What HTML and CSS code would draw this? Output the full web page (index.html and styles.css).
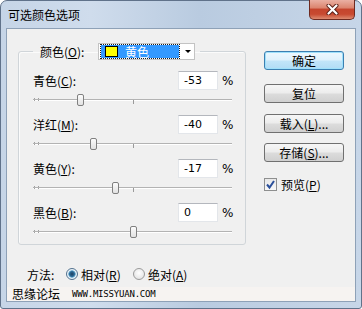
FILE: index.html
```html
<!DOCTYPE html>
<html lang="zh-CN">
<head>
<meta charset="utf-8">
<title>可选颜色选项</title>
<link rel="stylesheet" href="styles.css">
</head>
<body>
<div class="window">
  <div class="titlebar">
    <span class="title">可选颜色选项</span>
    <span class="close">
      <svg width="13" height="11" viewBox="0 0 13 11"><path d="M2.5 1.5 L10.5 9.5 M10.5 1.5 L2.5 9.5" stroke="#5a1f16" stroke-width="4" stroke-linecap="round"/><path d="M2.5 1.5 L10.5 9.5 M10.5 1.5 L2.5 9.5" stroke="#ffffff" stroke-width="2.2" stroke-linecap="round"/></svg>
    </span>
  </div>
  <div class="client">
    <div class="main">
      <div class="left">
        <fieldset class="group">
          <legend class="legend">
            <span class="legend-lbl">颜色(<u>O</u>):</span>
            <span class="combo">
              <span class="combo-sel"><span class="swatch"></span><span class="combo-text">黄色</span></span>
              <span class="arrow"></span>
            </span>
          </legend>
          <div class="row">
            <div class="line"><span class="lbl">青色(<u>C</u>):</span><span class="num">-53</span><span class="pct">%</span></div>
            <div class="slider"><span class="track"></span><span class="dots"></span><span class="tick"></span><span class="thumb" style="left:44px"></span></div>
          </div>
          <div class="row">
            <div class="line"><span class="lbl">洋红(<u>M</u>):</span><span class="num">-40</span><span class="pct">%</span></div>
            <div class="slider"><span class="track"></span><span class="dots"></span><span class="tick"></span><span class="thumb" style="left:57px"></span></div>
          </div>
          <div class="row">
            <div class="line"><span class="lbl">黄色(<u>Y</u>):</span><span class="num">-17</span><span class="pct">%</span></div>
            <div class="slider"><span class="track"></span><span class="dots"></span><span class="tick"></span><span class="thumb" style="left:79px"></span></div>
          </div>
          <div class="row">
            <div class="line"><span class="lbl">黑色(<u>B</u>):</span><span class="num">0</span><span class="pct">%</span></div>
            <div class="slider"><span class="track"></span><span class="dots"></span><span class="tick"></span><span class="thumb" style="left:97px"></span></div>
          </div>
        </fieldset>
        <div class="method">
          <span class="method-lbl">方法:</span>
          <span class="opt opt-first"><span class="radio checked"></span><span>相对(<u>R</u>)</span></span>
          <span class="opt"><span class="radio"></span><span>绝对(<u>A</u>)</span></span>
        </div>
      </div>
      <div class="right">
        <span class="btn btn-default">确定</span>
        <span class="btn btn-reset">复位</span>
        <span class="btn btn-load">载入(<u>L</u>)...</span>
        <span class="btn btn-save">存储(<u>S</u>)...</span>
        <span class="preview"><span class="checkbox"><svg width="11" height="11" viewBox="0 0 11 11"><path d="M2 5.5 L4.5 8.5 L9 2" fill="none" stroke="#2a4f9a" stroke-width="2"/></svg></span><span>预览(<u>P</u>)</span></span>
      </div>
    </div>
    <div class="watermark">
      <span class="wm-name">思缘论坛</span>
      <span class="wm-url">www.missyuan.com</span>
    </div>
  </div>
</div>
</body>
</html>
```
FILE: styles.css
```css
* { box-sizing: border-box; }

body {
  margin: 0;
  font-family: "Noto Sans CJK SC", "Noto Sans", sans-serif;
  font-size: 12px;
  color: #000;
  background: #ffffff;
}

u { text-decoration: underline; text-underline-offset: 1px; }

.window {
  width: 362px;
  height: 309px;
  border: 1px solid #60728a;
  border-radius: 7px 7px 3px 3px;
  background: linear-gradient(to right, #c6d5e7 0, #cfdcec 25%, #b9cbe0 55%, #c7d6e8 100%);
  padding: 0 6px 7px 6px;
  display: flex;
  flex-direction: column;
}

.titlebar {
  height: 28px;
  display: flex;
  align-items: flex-start;
  flex: none;
}

.title {
  margin-top: 5px;
  padding-left: 1px;
  line-height: 17px;
  font-size: 12px;
  color: #000;
}

.close {
  margin-left: auto;
  margin-top: -1px;
  width: 46px;
  height: 20px;
  border: 1px solid #6e2a20;
  border-top: none;
  border-radius: 0 0 5px 5px;
  background: linear-gradient(to bottom, #eab0a3 0, #dc8670 40%, #c5452d 50%, #c84a31 75%, #dd8a70 100%);
  display: flex;
  align-items: center;
  justify-content: center;
}

.client {
  flex: 1;
  background: #f0f0f0;
  box-shadow: 0 0 0 1px #8ea1b7;
  display: flex;
  flex-direction: column;
}

.main {
  height: 258px;
  display: flex;
  flex: none;
}

.left {
  width: 257px;
  padding-top: 14px;
  padding-left: 11px;
}

.group {
  width: 228px;
  margin: 0;
  border: 1px solid #d0d5d9;
  border-radius: 3px;
  box-shadow: inset 1px 1px 0 #fbfbfb;
  padding: 11px 13px 2px 14px;
}

.legend {
  padding: 0 5px 0 7px;
  display: flex;
  align-items: center;
  height: 17px;
}

.legend-lbl {
  width: 58px;
  line-height: 17px;
}

.combo {
  width: 97px;
  height: 17px;
  border: 1px solid #c3c3c3;
  background: #fff;
  display: flex;
  align-items: center;
  padding: 0 0 0 2px;
}

.combo-sel {
  width: 78px;
  height: 13px;
  background: #3399ff;
  outline: 1px dotted #1a1a1a;
  display: flex;
  align-items: center;
}

.swatch {
  width: 13px;
  height: 11px;
  margin-left: 4px;
  background: #ffff00;
  border: 1px solid #000;
}

.combo-text {
  color: #fff;
  margin-left: 7px;
  line-height: 13px;
}

.arrow {
  margin-left: 6px;
  width: 0;
  height: 0;
  border-left: 3px solid transparent;
  border-right: 3px solid transparent;
  border-top: 3px solid #000;
}

.row { margin-bottom: 5px; }
.row:last-child { margin-bottom: 0; }

.line {
  display: flex;
  align-items: center;
  height: 19px;
}

.lbl { flex: 1; line-height: 17px; }

.num {
  width: 40px;
  height: 19px;
  background: #fff;
  border: 1px solid #e3e6ea;
  border-top-color: #b4b7bd;
  font-family: "DejaVu Sans", sans-serif;
  font-size: 11px;
  line-height: 17px;
  padding-left: 5px;
}

.pct {
  margin-left: 4px;
  width: 10px;
  font-family: "DejaVu Sans", sans-serif;
  font-size: 12px;
  white-space: nowrap;
}

.slider {
  position: relative;
  height: 20px;
}

.track {
  position: absolute;
  left: 0;
  right: 0;
  top: 9px;
  height: 2px;
  border-top: 1px solid #b3b3b3;
  border-bottom: 1px solid #ffffff;
}

.dots {
  position: absolute;
  left: 1px;
  top: 8px;
  width: 5px;
  height: 3px;
  border-left: 1px dotted #a0a0a0;
  border-right: 1px dotted #a0a0a0;
}

.tick {
  position: absolute;
  left: 100px;
  top: 10px;
  width: 1px;
  height: 4px;
  background: #9a9a9a;
}

.thumb {
  position: absolute;
  top: 4px;
  width: 7px;
  height: 12px;
  border: 1px solid #808080;
  border-radius: 2px;
  background: linear-gradient(to bottom, #fcfcfc, #e2e2e2);
}

.method {
  display: flex;
  align-items: center;
  height: 18px;
  margin-top: 20px;
  margin-left: 9px;
}

.method-lbl { width: 39px; }

.opt { display: flex; align-items: center; }
.opt-first { width: 67px; }

.radio {
  width: 12px;
  height: 12px;
  border-radius: 50%;
  border: 1px solid #9a9a9a;
  background: radial-gradient(circle at 50% 40%, #ffffff, #dcdcdc);
  margin-right: 3px;
  position: relative;
}

.radio.checked {
  border-color: #53728f;
  background: radial-gradient(circle at 50% 50%, #1f3f5f 0, #2c6b98 2.5px, #7fb7d8 3.5px, #e9f2f8 4px);
}

.right {
  width: 80px;
  padding-top: 22px;
  display: flex;
  flex-direction: column;
  align-items: flex-start;
}

.btn {
  width: 80px;
  height: 19px;
  border: 1px solid #707070;
  border-radius: 3px;
  background: linear-gradient(to bottom, #f6f6f6 0, #ececec 48%, #dcdcdc 52%, #d0d0d0 100%);
  display: flex;
  align-items: center;
  justify-content: center;
  line-height: 17px;
}

.btn-default {
  border-color: #3c7fb1;
  background: linear-gradient(to bottom, #eef8fe 0, #dff1fc 48%, #c2e5f9 52%, #b1dcf5 100%);
  box-shadow: inset 0 0 0 1px #9fe0fb;
}

.btn-reset { margin-top: 14px; }
.btn-load { margin-top: 11px; }
.btn-save { margin-top: 10px; }

.preview {
  margin-top: 15px;
  display: flex;
  align-items: center;
  line-height: 15px;
}

.checkbox {
  width: 13px;
  height: 13px;
  border: 1px solid #8e8f8f;
  background: linear-gradient(to bottom, #e8e8e8, #f8f8f8);
  margin-right: 4px;
  display: flex;
  align-items: center;
  justify-content: center;
}

.watermark {
  flex: 1;
  display: flex;
  align-items: center;
  padding-left: 5px;
  background: #f6f3f1;
}

.wm-name { font-size: 12px; line-height: 14px; }

.wm-url {
  margin-left: 12px;
  font-family: "DejaVu Sans Mono", monospace;
  font-size: 9px;
  text-transform: uppercase;
  letter-spacing: -0.2px;
}
```
